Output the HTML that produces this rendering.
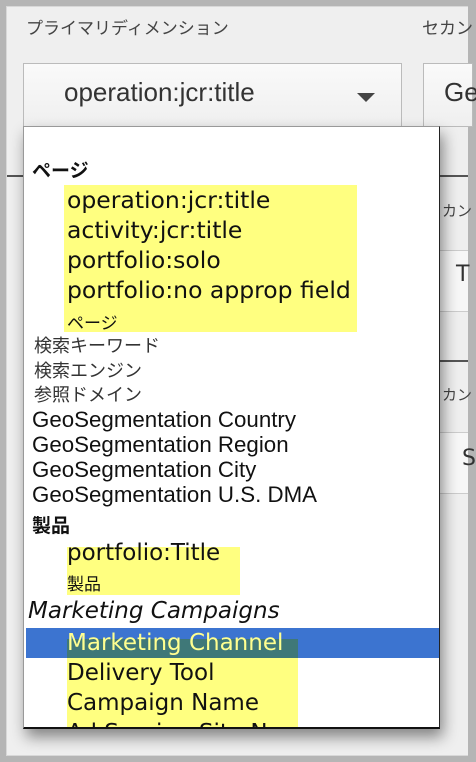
<!DOCTYPE html>
<html><head><meta charset="utf-8"><style>
*{margin:0;padding:0;box-sizing:border-box}
body{width:476px;height:762px;background:#b5b5b5;position:relative;overflow:hidden;font-family:"DejaVu Sans","Liberation Sans","Noto Sans CJK JP",sans-serif;color:#111}
.a{position:absolute;white-space:nowrap}
.jp{font-family:"Liberation Sans","Noto Sans CJK JP",sans-serif}
</style></head><body>
<div class="a" style="left:6px;top:6px;width:463px;height:750px;background:#efefef;border:1px solid #d8d8d8"></div>
<div class="a" style="left:468px;top:0;width:8px;height:762px;background:#b5b5b5"></div>
<div class="a jp" style="left:26px;top:14px;font-size:17px;color:#444">プライマリディメンション</div>
<div class="a jp" style="left:422px;top:14px;font-size:17px;color:#444">セカン</div>
<div class="a" style="left:23px;top:63px;width:379px;height:64px;background:linear-gradient(#fafafa,#efefef);border:1px solid #bbb"></div>
<div class="a" style="left:64px;top:77px;font-size:26px;color:#333;font-family:'Liberation Sans',sans-serif">operation:jcr:title</div>
<div class="a" style="left:357px;top:93px;width:0;height:0;border-left:9px solid transparent;border-right:9px solid transparent;border-top:9px solid #444"></div>
<div class="a" style="left:423px;top:63px;width:50px;height:64px;background:linear-gradient(#fafafa,#efefef);border:1px solid #bbb"></div>
<div class="a" style="left:444px;top:77px;font-size:26px;color:#333;font-family:'Liberation Sans',sans-serif">Ge</div>
<div class="a" style="left:7px;top:175px;width:17px;height:2px;background:#555"></div>
<div class="a" style="left:440px;top:175px;width:28px;height:2px;background:#555"></div>
<div class="a" style="left:440px;top:360px;width:28px;height:2px;background:#555"></div>
<div class="a jp" style="left:442px;top:200px;font-size:15px;color:#444">カン</div>
<div class="a jp" style="left:442px;top:384px;font-size:15px;color:#444">カン</div>
<div class="a" style="left:440px;top:250px;width:28px;height:62px;background:#f7f7f7;border-top:1px solid #ccc;border-bottom:1px solid #ccc"></div>
<div class="a" style="left:456px;top:262px;font-size:22px;color:#333">T</div>
<div class="a" style="left:440px;top:432px;width:28px;height:62px;background:#f7f7f7;border-top:1px solid #ccc;border-bottom:1px solid #ccc"></div>
<div class="a" style="left:462px;top:446px;font-size:22px;color:#333">S</div>
<div class="a" style="left:23px;top:126px;width:417px;height:603px;background:#fff;border:1px solid #999;border-right:1px solid #222;border-bottom:2px solid #111;box-shadow:3px 8px 14px rgba(0,0,0,.45);overflow:hidden">
<div class="a" style="left:40px;top:58px;width:293px;height:147px;background:#ffff80"></div>
<div class="a" style="left:43px;top:420px;width:173px;height:48px;background:#ffff80"></div>
<div class="a" style="left:2px;top:501px;width:414px;height:30px;background:#3c74d0"></div>
<div class="a" style="left:43px;top:512px;width:231px;height:88px;background:#ffff80"></div>
<div class="a" style="left:43px;top:512px;width:231px;height:19px;background:#3f7878"></div>
<div class="a jp" style="left:8px;top:29px;font-size:19px;font-weight:bold">ページ</div>
<div class="a" style="left:43px;top:58px;font-size:23.5px;line-height:30px">operation:jcr:title<br>activity:jcr:title<br>portfolio:solo<br>portfolio:no approp field</div>
<div class="a jp" style="left:43px;top:182px;font-size:17px">ページ</div>
<div class="a jp" style="left:10px;top:207px;font-size:18px;line-height:24.5px;color:#333">検索キーワード<br>検索エンジン<br>参照ドメイン</div>
<div class="a" style="left:8px;top:280px;font-size:22.3px;line-height:25px;font-family:'Liberation Sans',sans-serif">GeoSegmentation Country<br>GeoSegmentation Region<br>GeoSegmentation City<br>GeoSegmentation U.S. DMA</div>
<div class="a jp" style="left:8px;top:384px;font-size:19px;font-weight:bold">製品</div>
<div class="a" style="left:43px;top:413px;font-size:23px">portfolio:Title</div>
<div class="a jp" style="left:43px;top:443px;font-size:17px">製品</div>
<div class="a" style="left:4px;top:471px;font-size:23px;font-style:italic">Marketing Campaigns</div>
<div class="a" style="left:43px;top:501px;font-size:23px;line-height:30px">
<span style="color:#ffff90">Marketing Channel</span><br>Delivery Tool<br>Campaign Name<br>Ad Serving Site Name</div>
</div>
</body></html>
